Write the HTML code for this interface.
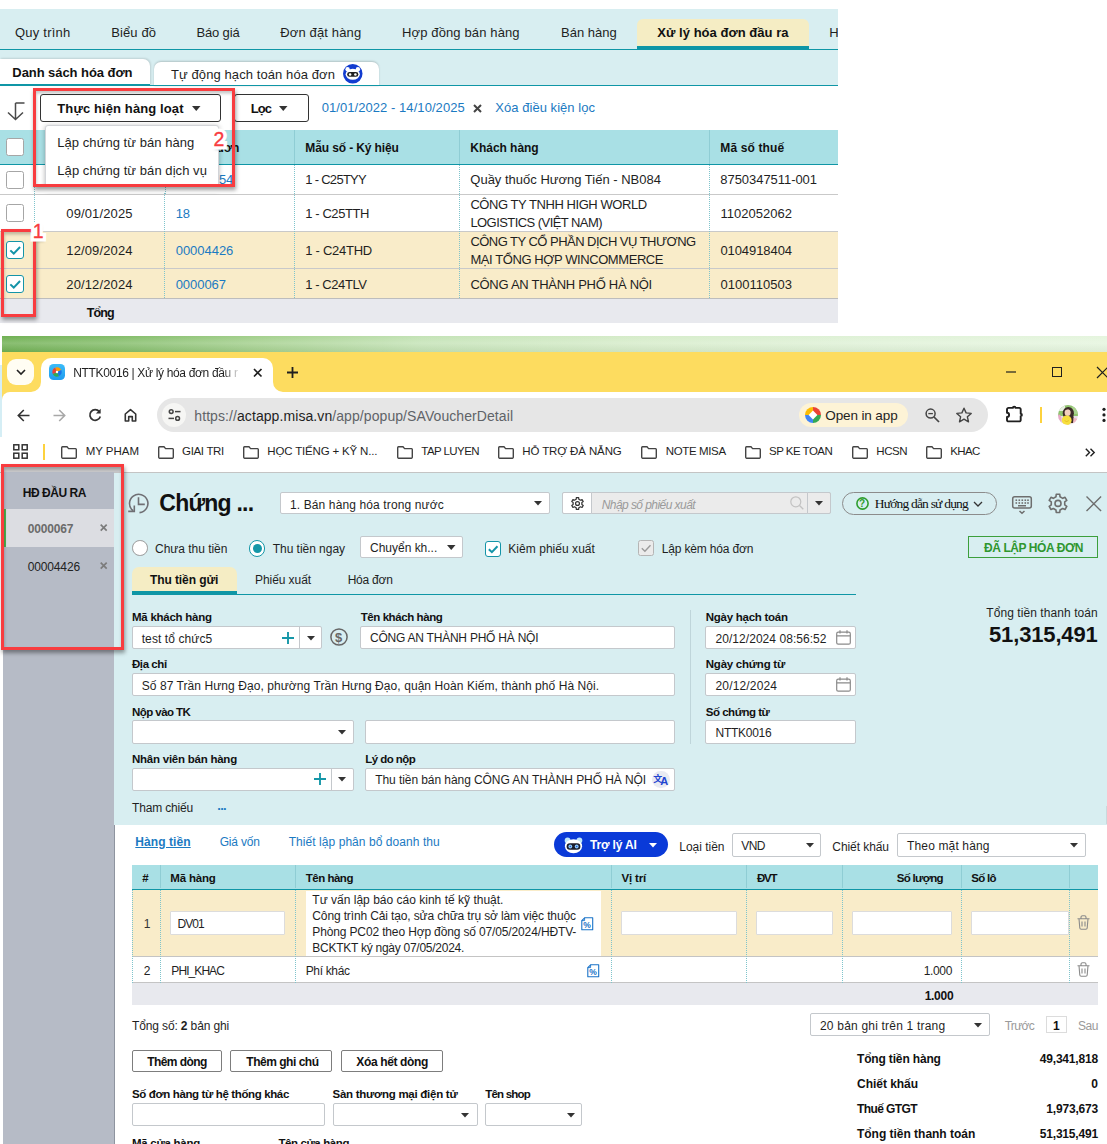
<!DOCTYPE html>
<html lang="vi"><head><meta charset="utf-8"><title>NTTK0016 | Xử lý hóa đơn đầu ra</title>
<style>
html,body{margin:0;padding:0;background:#fff}
body{width:1107px;height:1144px;position:relative;overflow:hidden;font-family:"Liberation Sans",sans-serif;font-size:13px;color:#1f1f1f}
#r{position:absolute;left:0;top:0;width:1107px;height:1144px;overflow:hidden}
#r div,#r svg,#r span.t{position:absolute;box-sizing:border-box}
#r svg{overflow:visible}
span.t{white-space:nowrap;line-height:20px;height:20px}
.inp{background:#fff;border:1px solid #c4c8cc;border-radius:2px}
.ser{font-family:"Liberation Serif",serif}
</style></head>
<body><div id="r">
<div style="left:0px;top:9px;width:838px;height:76px;background:#d8eef1"></div>
<div style="left:0px;top:49px;width:838px;height:1px;background:#0f96a6"></div>
<span class="t" style="font-size:13px;color:#1f1f1f;letter-spacing:0.23px;left:15px;top:23.3px;">Quy trình</span>
<span class="t" style="font-size:13px;color:#1f1f1f;letter-spacing:0.09px;left:111.3px;top:23.3px;">Biểu đồ</span>
<span class="t" style="font-size:13px;color:#1f1f1f;letter-spacing:-0.16px;left:196.5px;top:23.3px;">Báo giá</span>
<span class="t" style="font-size:13px;color:#1f1f1f;letter-spacing:0.14px;left:280.3px;top:23.3px;">Đơn đặt hàng</span>
<span class="t" style="font-size:13px;color:#1f1f1f;letter-spacing:0.13px;left:402px;top:23.3px;">Hợp đồng bán hàng</span>
<span class="t" style="font-size:13px;color:#1f1f1f;left:561px;top:23.3px;">Bán hàng</span>
<div style="left:636.7px;top:19px;width:172.6px;height:30.5px;background:#f5edc4;border-radius:6px 6px 0 0"></div>
<div style="left:636.7px;top:46px;width:172.6px;height:3.5px;background:#0f96a6"></div>
<span class="t" style="font-size:13px;color:#111;font-weight:700;letter-spacing:0.03px;left:657.3px;top:23.3px;">Xử lý hóa đơn đầu ra</span>
<span class="t" style="font-size:13px;color:#1f1f1f;left:829.3px;top:23.3px;width:9px;overflow:hidden">H</span>
<div style="left:0px;top:58.5px;width:149.5px;height:27.5px;background:#fff;border-radius:0 7px 0 0;box-shadow:1px -1px 2px rgba(0,0,0,.12)"></div>
<div style="left:154px;top:62px;width:225px;height:23.5px;background:#fff;border-radius:7px 7px 0 0;box-shadow:0 -0.5px 2px rgba(0,0,0,.18)"></div>
<div style="left:0px;top:85px;width:838px;height:1.2px;background:#0f96a6"></div>
<div style="left:0px;top:84px;width:149.5px;height:2.2px;background:#0f96a6"></div>
<span class="t" style="font-size:13px;color:#111;font-weight:700;letter-spacing:-0.06px;left:12.3px;top:63.1px;">Danh sách hóa đơn</span>
<span class="t" style="font-size:13px;color:#1f1f1f;letter-spacing:0.09px;left:171px;top:64.8px;">Tự động hạch toán hóa đơn</span>
<svg style="left:343.3px;top:63.8px;" width="19.5" height="19.5" viewBox="0 0 17 17"><circle cx="8.5" cy="8.5" r="8.5" fill="#123cd0"/><ellipse cx="8.5" cy="9" rx="6.2" ry="4.8" fill="#fff"/><circle cx="4" cy="4.6" r="1.9" fill="#fff"/><circle cx="13" cy="4.6" r="1.9" fill="#fff"/><rect x="3.6" y="7" width="9.8" height="4.2" rx="2.1" fill="#222"/><circle cx="6.2" cy="9.1" r="1.1" fill="#fff"/><circle cx="10.8" cy="9.1" r="1.1" fill="#fff"/></svg>
<svg style="left:6px;top:100px;" width="20" height="21" viewBox="0 0 20 21"><path d="M9.5 3H18.5M9.5 3V19M2 12.5L9.5 19.5L17 12.5" fill="none" stroke="#4a4a4a" stroke-width="1.5"/></svg>
<div style="left:40.3px;top:94px;width:180.4px;height:27.6px;border:1px solid #333;border-radius:3px;background:#fff"></div>
<span class="t" style="font-size:13px;color:#111;font-weight:700;letter-spacing:0.11px;left:57.3px;top:99.1px;">Thực hiện hàng loạt</span>
<svg style="left:192.05px;top:106.0px" width="8.5" height="5" viewBox="0 0 8.5 5"><path d="M0 0H8.5L4.25 5Z" fill="#333"/></svg>
<div style="left:234px;top:94px;width:75px;height:27.6px;border:1px solid #333;border-radius:3px;background:#fff"></div>
<span class="t" style="font-size:13px;color:#111;font-weight:700;letter-spacing:-0.94px;left:250.7px;top:99.1px;">Lọc</span>
<svg style="left:278.55px;top:106.0px" width="8.5" height="5" viewBox="0 0 8.5 5"><path d="M0 0H8.5L4.25 5Z" fill="#333"/></svg>
<span class="t" style="font-size:13px;color:#1b7ac2;letter-spacing:0.06px;left:321.7px;top:97.9px;">01/01/2022 - 14/10/2025</span>
<svg style="left:472.7px;top:103.7px;" width="9" height="9" viewBox="0 0 9 9"><path d="M1 1L8 8M8 1L1 8" stroke="#444" stroke-width="2"/></svg>
<span class="t" style="font-size:13px;color:#1b7ac2;letter-spacing:0.04px;left:495.3px;top:97.9px;">Xóa điều kiện lọc</span>
<div style="left:0px;top:130px;width:838px;height:34px;background:#a9e0e5"></div>
<div style="left:0px;top:164px;width:838px;height:1.2px;background:#0f96a6"></div>
<div style="left:294.3px;top:130px;width:1px;height:34px;background:#8fcdd4"></div>
<div style="left:459.3px;top:130px;width:1px;height:34px;background:#8fcdd4"></div>
<div style="left:709.3px;top:130px;width:1px;height:34px;background:#8fcdd4"></div>
<span class="t" style="font-size:12px;color:#111;font-weight:700;letter-spacing:-0.25px;left:175px;top:137.8px;">Số hóa đơn</span>
<span class="t" style="font-size:12px;color:#111;font-weight:700;letter-spacing:-0.12px;left:305.3px;top:137.8px;">Mẫu số - Ký hiệu</span>
<span class="t" style="font-size:12px;color:#111;font-weight:700;letter-spacing:-0.03px;left:470.3px;top:137.8px;">Khách hàng</span>
<span class="t" style="font-size:12px;color:#111;font-weight:700;letter-spacing:0.13px;left:720.3px;top:137.8px;">Mã số thuế</span>
<div style="left:0px;top:165.2px;width:838px;height:29.80000000000001px;background:#fff;border-bottom:1px solid #c9c9c9"></div>
<div style="left:0px;top:195px;width:838px;height:37px;background:#fff;border-bottom:1px solid #c9c9c9"></div>
<div style="left:0px;top:232px;width:838px;height:37px;background:#f9ecc9;border-bottom:1px solid #c9c9c9"></div>
<div style="left:0px;top:269px;width:838px;height:30px;background:#f9ecc9;border-bottom:1px solid #c9c9c9"></div>
<div style="left:0px;top:298px;width:838px;height:24.7px;background:#e8e9ee;border-top:1.5px solid #bdbdbd"></div>
<div style="left:34px;top:165.2px;width:0px;height:132.8px;border-left:1px dotted #7fc4cc"></div>
<div style="left:164px;top:165.2px;width:0px;height:132.8px;border-left:1px dotted #7fc4cc"></div>
<div style="left:294px;top:165.2px;width:0px;height:132.8px;border-left:1px dotted #7fc4cc"></div>
<div style="left:459px;top:165.2px;width:0px;height:132.8px;border-left:1px dotted #7fc4cc"></div>
<div style="left:709px;top:165.2px;width:0px;height:132.8px;border-left:1px dotted #7fc4cc"></div>
<span class="t" style="font-size:12.5px;color:#111;font-weight:700;letter-spacing:-0.89px;left:86.7px;top:302.8px;">Tổng</span>
<div style="left:6px;top:138px;width:18px;height:18px;background:#fff;border:1.2px solid #a6a6a6;border-radius:2.5px"></div>
<div style="left:6px;top:170.6px;width:18px;height:18px;background:#fff;border:1.2px solid #a6a6a6;border-radius:2.5px"></div>
<div style="left:6px;top:204px;width:18px;height:18px;background:#fff;border:1.2px solid #a6a6a6;border-radius:2.5px"></div>
<div style="left:6px;top:241px;width:18px;height:18px;background:#fff;border:1.5px solid #1494a8;border-radius:3px"></div>
<svg style="left:6px;top:241px;" width="18" height="18" viewBox="0 0 18 18"><path d="M4.32 9.36L7.74 12.6L14.040000000000001 5.94" fill="none" stroke="#1494a8" stroke-width="2"/></svg>
<div style="left:6px;top:275px;width:18px;height:18px;background:#fff;border:1.5px solid #1494a8;border-radius:3px"></div>
<svg style="left:6px;top:275px;" width="18" height="18" viewBox="0 0 18 18"><path d="M4.32 9.36L7.74 12.6L14.040000000000001 5.94" fill="none" stroke="#1494a8" stroke-width="2"/></svg>
<span class="t" style="font-size:13px;color:#1b7ac2;letter-spacing:-0.23px;left:219px;top:170.4px;text-decoration:underline">54</span>
<span class="t" style="font-size:13px;color:#1f1f1f;letter-spacing:-0.72px;left:305.3px;top:170.4px;">1 - C25TYY</span>
<span class="t" style="font-size:13px;color:#1f1f1f;left:470.3px;top:170.4px;">Quầy thuốc Hương Tiến - NB084</span>
<span class="t" style="font-size:13px;color:#1f1f1f;letter-spacing:-0.05px;left:720.3px;top:170.4px;">8750347511-001</span>
<span class="t" style="font-size:13px;color:#1f1f1f;letter-spacing:0.13px;left:66.3px;top:204.1px;">09/01/2025</span>
<span class="t" style="font-size:13px;color:#1b7ac2;letter-spacing:-0.08px;left:175.7px;top:204.1px;">18</span>
<span class="t" style="font-size:13px;color:#1f1f1f;letter-spacing:-0.42px;left:305.3px;top:204.1px;">1 - C25TTH</span>
<span class="t" style="font-size:13px;color:#1f1f1f;letter-spacing:-0.44px;left:470.4px;top:195.2px;">CÔNG TY TNHH HIGH WORLD</span>
<span class="t" style="font-size:13px;color:#1f1f1f;letter-spacing:-0.56px;left:470.4px;top:213.4px;">LOGISTICS (VIỆT NAM)</span>
<span class="t" style="font-size:13px;color:#1f1f1f;letter-spacing:0.03px;left:720.4px;top:204.1px;">1102052062</span>
<span class="t" style="font-size:13px;color:#1f1f1f;letter-spacing:0.13px;left:66.3px;top:241.1px;">12/09/2024</span>
<span class="t" style="font-size:13px;color:#1b7ac2;letter-spacing:-0.03px;left:175.7px;top:241.1px;">00004426</span>
<span class="t" style="font-size:13px;color:#1f1f1f;letter-spacing:-0.27px;left:305.3px;top:241.1px;">1 - C24THD</span>
<span class="t" style="font-size:13px;color:#1f1f1f;letter-spacing:-0.53px;left:470.4px;top:231.8px;">CÔNG TY CỔ PHẦN DỊCH VỤ THƯƠNG</span>
<span class="t" style="font-size:13px;color:#1f1f1f;letter-spacing:-0.42px;left:470.4px;top:249.8px;">MẠI TỔNG HỢP WINCOMMERCE</span>
<span class="t" style="font-size:13px;color:#1f1f1f;letter-spacing:-0.07px;left:720.4px;top:241.1px;">0104918404</span>
<span class="t" style="font-size:13px;color:#1f1f1f;letter-spacing:0.13px;left:66.3px;top:275.3px;">20/12/2024</span>
<span class="t" style="font-size:13px;color:#1b7ac2;letter-spacing:-0.05px;left:175.7px;top:275.3px;">0000067</span>
<span class="t" style="font-size:13px;color:#1f1f1f;letter-spacing:-0.43px;left:305.3px;top:275.3px;">1 - C24TLV</span>
<span class="t" style="font-size:13px;color:#1f1f1f;letter-spacing:-0.28px;left:470.4px;top:275.3px;">CÔNG AN THÀNH PHỐ HÀ NỘI</span>
<span class="t" style="font-size:13px;color:#1f1f1f;letter-spacing:0.03px;left:720.4px;top:275.3px;">0100110503</span>
<div style="left:45px;top:125px;width:173.6px;height:64px;background:#fff;border:1px solid #d2d4d8;border-radius:3px;box-shadow:0 1px 5px rgba(0,0,0,.3)"></div>
<span class="t" style="font-size:13px;color:#1f1f1f;letter-spacing:0.05px;left:57.3px;top:132.5px;">Lập chứng từ bán hàng</span>
<span class="t" style="font-size:13px;color:#1f1f1f;letter-spacing:0.06px;left:57.3px;top:160.5px;">Lập chứng từ bán dịch vụ</span>
<div style="left:36px;top:186.7px;width:199px;height:6.3px;background:#fff"></div>
<div style="left:34px;top:186.7px;width:0px;height:7.3px;border-left:1px dotted #7fc4cc"></div>
<div style="left:164.7px;top:186.7px;width:0px;height:7.3px;border-left:1px dotted #7fc4cc"></div>
<div style="left:33.2px;top:88px;width:201.8px;height:98.8px;border:3px solid #f83c3f;box-shadow:0.5px 3px 4px rgba(0,0,0,.38), inset 0.5px 2.5px 3px rgba(0,0,0,.22)"></div>
<div style="left:1px;top:229.1px;width:35px;height:87.9px;border:3px solid #f83c3f;box-shadow:0.5px 3px 4px rgba(0,0,0,.38), inset 0.5px 2.5px 3px rgba(0,0,0,.22)"></div>
<span class="t" style="font-size:19.5px;color:#fff;left:213.6px;top:128.7px;-webkit-text-stroke:7px #fff;text-shadow:1px 2.5px 3px rgba(0,0,0,.5);">2</span>
<span class="t" style="font-size:19.5px;color:#f83c3f;left:213.6px;top:128.7px;-webkit-text-stroke:0.35px #f83c3f;">2</span>
<span class="t" style="font-size:19.5px;color:#fff;left:32.8px;top:220.6px;-webkit-text-stroke:7px #fff;text-shadow:1px 2.5px 3px rgba(0,0,0,.5);">1</span>
<span class="t" style="font-size:19.5px;color:#f83c3f;left:32.8px;top:220.6px;-webkit-text-stroke:0.35px #f83c3f;">1</span>
<div style="left:2px;top:335.5px;width:1105px;height:16.3px;background:linear-gradient(90deg,#70b053 0,#82bc68 10%,#a6d190 24%,#c4e3b6 38%,#d6ecca 58%,#e0f2d8 80%,#e5f5de 100%)"></div>
<div style="left:2px;top:335.5px;width:1105px;height:16.3px;background:linear-gradient(180deg,rgba(255,255,255,.0) 0,rgba(255,255,255,.18) 45%,rgba(0,0,0,.04) 100%)"></div>
<div style="left:2px;top:351.8px;width:1105px;height:40.2px;background:#fddc5f"></div>
<div style="left:2px;top:391.7px;width:20px;height:20px;background:#fddc5f"></div>
<div style="left:2px;top:391.7px;width:1105px;height:80.3px;background:#ffffff;border-radius:8px 0 0 0"></div>
<div style="left:0px;top:437px;width:2px;height:35px;background:#ffffff"></div>
<div style="left:0px;top:365px;width:2px;height:72px;background:#d5eef5"></div>
<div style="left:7.3px;top:359px;width:27px;height:26px;background:#fffdf3;border-radius:9px"></div>
<svg style="left:16px;top:369px;" width="10" height="6" viewBox="0 0 10 6"><path d="M1 1L5 5L9 1" fill="none" stroke="#222" stroke-width="1.6"/></svg>
<div style="left:41px;top:358.3px;width:231.7px;height:34px;background:#ffffff;border-radius:10px 10px 0 0"></div>
<svg style="left:31px;top:381.7px;" width="10" height="10" viewBox="0 0 10 10"><path d="M10 0V10H0A10 10 0 0 0 10 0Z" fill="#ffffff"/></svg>
<svg style="left:272.7px;top:381.7px;" width="10" height="10" viewBox="0 0 10 10"><path d="M0 0V10H10A10 10 0 0 1 0 0Z" fill="#ffffff"/></svg>
<svg style="left:49px;top:363.8px;" width="16" height="16" viewBox="0 0 16 16"><defs><linearGradient id="fv" x1="0" y1="0" x2="0" y2="1"><stop offset="0" stop-color="#3cbcf8"/><stop offset="1" stop-color="#1f9bef"/></linearGradient></defs><rect x="0" y="0" width="16" height="16" rx="4.6" fill="url(#fv)"/><g transform="rotate(-25 8 8)"><path d="M8 3.3A4.7 4.7 0 0 1 12.7 8H8Z" fill="#ff9800"/><path d="M12.7 8A4.7 4.7 0 0 1 8 12.7V8Z" fill="#1a73e8"/><path d="M8 12.7A4.7 4.7 0 0 1 3.3 8H8Z" fill="#34a853"/><path d="M3.3 8A4.7 4.7 0 0 1 8 3.3V8Z" fill="#ea4335"/></g><circle cx="8" cy="8" r="1.2" fill="#fff"/></svg>
<span class="t" style="font-size:12px;color:#1f1f1f;letter-spacing:-0.34px;left:73.3px;top:363.4px;width:170px;overflow:hidden;-webkit-mask-image:linear-gradient(90deg,#000 0,#000 150px,transparent 168px)">NTTK0016 | Xử lý hóa đơn đầu r</span>
<svg style="left:252.5px;top:367.5px;" width="9.5" height="9.5" viewBox="0 0 9.5 9.5"><path d="M1 1L8.5 8.5M8.5 1L1 8.5" stroke="#1f1f1f" stroke-width="1.7"/></svg>
<svg style="left:287px;top:366.5px;" width="11" height="11" viewBox="0 0 11 11"><path d="M5.5 0V11M0 5.5H11" stroke="#1f1f1f" stroke-width="1.8"/></svg>
<svg style="left:1006.3px;top:371px;" width="10" height="2" viewBox="0 0 10 2"><path d="M0 1H10" stroke="#1f1f1f" stroke-width="1.2"/></svg>
<div style="left:1052px;top:366.7px;width:10.3px;height:10.3px;border:1.3px solid #1f1f1f"></div>
<svg style="left:1097.3px;top:366.5px;" width="11" height="11" viewBox="0 0 11 11"><path d="M0 0L11 11M11 0L0 11" stroke="#1f1f1f" stroke-width="1.2"/></svg>
<svg style="left:16.5px;top:408.5px;" width="13" height="13" viewBox="0 0 13 13"><path d="M12.5 6.5H1.5M6.8 1L1.3 6.5L6.8 12" fill="none" stroke="#333" stroke-width="1.6"/></svg>
<svg style="left:52.5px;top:408.5px;" width="13" height="13" viewBox="0 0 13 13"><path d="M0.5 6.5H11.5M6.2 1L11.7 6.5L6.2 12" fill="none" stroke="#a8a8a8" stroke-width="1.6"/></svg>
<svg style="left:88px;top:408px;" width="14" height="14" viewBox="0 0 14 14"><path d="M11.3 3.6A5.3 5.3 0 1 0 12.3 8.4" fill="none" stroke="#333" stroke-width="1.7"/><path d="M12.7 0.8V5.6H7.9Z" fill="#333"/></svg>
<svg style="left:124px;top:407.5px;" width="13" height="14" viewBox="0 0 13 14"><path d="M1.3 6L6.5 1.6L11.7 6V13H8.3V8.6H4.7V13H1.3Z" fill="none" stroke="#333" stroke-width="1.6" stroke-linejoin="round"/></svg>
<div style="left:157.3px;top:398.3px;width:830.6px;height:33.4px;background:#e6e6e6;border-radius:17px"></div>
<div style="left:161.7px;top:402.9px;width:24.4px;height:24.4px;background:#f6f6f4;border-radius:50%"></div>
<svg style="left:167.7px;top:408px;left:167.7px" width="13" height="14" viewBox="0 0 13 14"><g fill="none" stroke="#444" stroke-width="1.5"><circle cx="3.2" cy="3.6" r="1.9"/><path d="M7 3.6H12.5"/><circle cx="9.6" cy="10.4" r="1.9"/><path d="M0.5 10.4H6"/></g></svg>
<span class="t" style="font-size:14px;color:#1f1f1f;letter-spacing:0.08px;left:194.3px;top:405.8px;"><span style="color:#5f6368">https://</span><span style="color:#1f1f1f">actapp.misa.vn</span><span style="color:#5f6368">/app/popup/SAVoucherDetail</span></span>
<div style="left:799px;top:403.3px;width:109px;height:23.4px;background:#fdf3d6;border-radius:12px"></div>
<svg style="left:804.7px;top:407px;" width="16" height="16" viewBox="0 0 16 16"><circle cx="8" cy="8" r="8" fill="#fff"/><path d="M8 0A8 8 0 0 1 16 8H8Z" fill="#ea4335"/><path d="M16 8A8 8 0 0 1 8 16V8Z" fill="#34a853" /><path d="M8 16A8 8 0 0 1 0 8H8Z" fill="#4285f4"/><path d="M0 8A8 8 0 0 1 8 0V8Z" fill="#fbbc05"/><path d="M8 3.6L12.4 8L8 12.4L3.6 8Z" fill="#fff"/></svg>
<span class="t" style="font-size:13.5px;color:#1f1f1f;letter-spacing:-0.12px;left:825.3px;top:405.8px;">Open in app</span>
<svg style="left:924.5px;top:408px;" width="15" height="15" viewBox="0 0 15 15"><circle cx="5.6" cy="5.6" r="4.5" fill="none" stroke="#444" stroke-width="1.5"/><path d="M9 9L14 14" stroke="#444" stroke-width="1.7"/><path d="M3.3 5.6H7.9" stroke="#444" stroke-width="1.3"/></svg>
<svg style="left:956px;top:407px;" width="16" height="16" viewBox="0 0 16 16"><path d="M8 1.2L10.1 5.9L15.2 6.4L11.4 9.8L12.5 14.8L8 12.2L3.5 14.8L4.6 9.8L0.8 6.4L5.9 5.9Z" fill="none" stroke="#444" stroke-width="1.4" stroke-linejoin="round"/></svg>
<svg style="left:1006.4px;top:405px;" width="18" height="18" viewBox="0 0 18 18"><path d="M2.5 2.9H6.9A1.3 1.3 0 0 1 9.5 2.9H13.2A1.5 1.5 0 0 1 14.7 4.4V8.7A1.2 1.2 0 0 1 14.7 11.1V14.9A1.5 1.5 0 0 1 13.2 16.4H2.5A1.5 1.5 0 0 1 1 14.9V12A2.1 2.1 0 0 0 1 7.8V4.4A1.5 1.5 0 0 1 2.5 2.9Z" fill="none" stroke="#1f1f1f" stroke-width="1.9" stroke-linejoin="round"/></svg>
<div style="left:1040px;top:407.2px;width:2px;height:15.5px;background:#fdd23e"></div>
<svg style="left:1058.2px;top:404.9px;" width="20" height="20" viewBox="0 0 20 20"><defs><clipPath id="av"><circle cx="10" cy="10" r="10"/></clipPath></defs><g clip-path="url(#av)"><rect width="20" height="20" fill="#e9dfe6"/><rect x="0" y="0" width="20" height="11" fill="#8fc46f"/><path d="M0 0H7V6H0Z" fill="#e8f0e2"/><path d="M14 0H20V9H14Z" fill="#a9d28d"/><ellipse cx="10.3" cy="8.2" rx="5.6" ry="6.2" fill="#3b2a28"/><path d="M13 8C16 10 16.5 15 15 18H12Z" fill="#3b2a28"/><ellipse cx="9.6" cy="7.6" rx="3" ry="3.5" fill="#f3cfbd"/><path d="M6.8 5.6C8.5 4 11.5 4 12.8 6L12.6 4.2L7.2 4Z" fill="#3b2a28"/><path d="M0 9.5C2 9 3.5 11 3.5 13.5V20H0Z" fill="#e8a9c8"/><path d="M15.5 13C18 12.5 20 14 20 16V20H15Z" fill="#f0b8c4"/><circle cx="8.7" cy="15.3" r="4.9" fill="#f7df3e"/><path d="M6.6 15.6Q8.7 17.6 10.8 15.6" fill="none" stroke="#e0b21e" stroke-width="0.7"/></g></svg>
<svg style="left:1102px;top:407px;" width="4" height="17" viewBox="0 0 4 17"><circle cx="2" cy="2.3" r="1.6" fill="#1f1f1f"/><circle cx="2" cy="7.9" r="1.6" fill="#1f1f1f"/><circle cx="2" cy="13.4" r="1.6" fill="#1f1f1f"/></svg>
<svg style="left:13.3px;top:444.3px;" width="15" height="15" viewBox="0 0 15 15"><g fill="none" stroke="#333" stroke-width="1.5"><rect x="0.8" y="0.8" width="5" height="5"/><rect x="9.2" y="0.8" width="5" height="5"/><rect x="0.8" y="9.2" width="5" height="5"/><rect x="9.2" y="9.2" width="5" height="5"/></g></svg>
<div style="left:43.2px;top:444px;width:2px;height:15.7px;background:#fdd23e"></div>
<svg style="left:60.7px;top:445.7px;" width="16" height="13" viewBox="0 0 16 13"><path d="M1.5 0.8H6L7.6 2.6H14.5A0.9 0.9 0 0 1 15.3 3.5V11.3A0.9 0.9 0 0 1 14.5 12.2H1.5A0.9 0.9 0 0 1 0.7 11.3V1.7A0.9 0.9 0 0 1 1.5 0.8Z" fill="none" stroke="#444" stroke-width="1.4"/></svg>
<span class="t" style="font-size:11.5px;color:#1f1f1f;letter-spacing:-0.02px;left:85.7px;top:441.2px;">MY PHAM</span>
<svg style="left:157.7px;top:445.7px;" width="16" height="13" viewBox="0 0 16 13"><path d="M1.5 0.8H6L7.6 2.6H14.5A0.9 0.9 0 0 1 15.3 3.5V11.3A0.9 0.9 0 0 1 14.5 12.2H1.5A0.9 0.9 0 0 1 0.7 11.3V1.7A0.9 0.9 0 0 1 1.5 0.8Z" fill="none" stroke="#444" stroke-width="1.4"/></svg>
<span class="t" style="font-size:11.5px;color:#1f1f1f;letter-spacing:-0.32px;left:182px;top:441.2px;">GIAI TRI</span>
<svg style="left:242.7px;top:445.7px;" width="16" height="13" viewBox="0 0 16 13"><path d="M1.5 0.8H6L7.6 2.6H14.5A0.9 0.9 0 0 1 15.3 3.5V11.3A0.9 0.9 0 0 1 14.5 12.2H1.5A0.9 0.9 0 0 1 0.7 11.3V1.7A0.9 0.9 0 0 1 1.5 0.8Z" fill="none" stroke="#444" stroke-width="1.4"/></svg>
<span class="t" style="font-size:11.5px;color:#1f1f1f;letter-spacing:-0.17px;left:267.3px;top:441.2px;">HỌC TIẾNG + KỸ N...</span>
<svg style="left:396.7px;top:445.7px;" width="16" height="13" viewBox="0 0 16 13"><path d="M1.5 0.8H6L7.6 2.6H14.5A0.9 0.9 0 0 1 15.3 3.5V11.3A0.9 0.9 0 0 1 14.5 12.2H1.5A0.9 0.9 0 0 1 0.7 11.3V1.7A0.9 0.9 0 0 1 1.5 0.8Z" fill="none" stroke="#444" stroke-width="1.4"/></svg>
<span class="t" style="font-size:11.5px;color:#1f1f1f;letter-spacing:-0.57px;left:421.3px;top:441.2px;">TAP LUYEN</span>
<svg style="left:498.3px;top:445.7px;" width="16" height="13" viewBox="0 0 16 13"><path d="M1.5 0.8H6L7.6 2.6H14.5A0.9 0.9 0 0 1 15.3 3.5V11.3A0.9 0.9 0 0 1 14.5 12.2H1.5A0.9 0.9 0 0 1 0.7 11.3V1.7A0.9 0.9 0 0 1 1.5 0.8Z" fill="none" stroke="#444" stroke-width="1.4"/></svg>
<span class="t" style="font-size:11.5px;color:#1f1f1f;letter-spacing:-0.12px;left:522.3px;top:441.2px;">HỖ TRỢ ĐÀ NẴNG</span>
<svg style="left:641.3px;top:445.7px;" width="16" height="13" viewBox="0 0 16 13"><path d="M1.5 0.8H6L7.6 2.6H14.5A0.9 0.9 0 0 1 15.3 3.5V11.3A0.9 0.9 0 0 1 14.5 12.2H1.5A0.9 0.9 0 0 1 0.7 11.3V1.7A0.9 0.9 0 0 1 1.5 0.8Z" fill="none" stroke="#444" stroke-width="1.4"/></svg>
<span class="t" style="font-size:11.5px;color:#1f1f1f;letter-spacing:-0.36px;left:665.7px;top:441.2px;">NOTE MISA</span>
<svg style="left:745.3px;top:445.7px;" width="16" height="13" viewBox="0 0 16 13"><path d="M1.5 0.8H6L7.6 2.6H14.5A0.9 0.9 0 0 1 15.3 3.5V11.3A0.9 0.9 0 0 1 14.5 12.2H1.5A0.9 0.9 0 0 1 0.7 11.3V1.7A0.9 0.9 0 0 1 1.5 0.8Z" fill="none" stroke="#444" stroke-width="1.4"/></svg>
<span class="t" style="font-size:11.5px;color:#1f1f1f;letter-spacing:-0.51px;left:769px;top:441.2px;">SP KE TOAN</span>
<svg style="left:852.3px;top:445.7px;" width="16" height="13" viewBox="0 0 16 13"><path d="M1.5 0.8H6L7.6 2.6H14.5A0.9 0.9 0 0 1 15.3 3.5V11.3A0.9 0.9 0 0 1 14.5 12.2H1.5A0.9 0.9 0 0 1 0.7 11.3V1.7A0.9 0.9 0 0 1 1.5 0.8Z" fill="none" stroke="#444" stroke-width="1.4"/></svg>
<span class="t" style="font-size:11.5px;color:#1f1f1f;letter-spacing:-0.47px;left:876.3px;top:441.2px;">HCSN</span>
<svg style="left:926.3px;top:445.7px;" width="16" height="13" viewBox="0 0 16 13"><path d="M1.5 0.8H6L7.6 2.6H14.5A0.9 0.9 0 0 1 15.3 3.5V11.3A0.9 0.9 0 0 1 14.5 12.2H1.5A0.9 0.9 0 0 1 0.7 11.3V1.7A0.9 0.9 0 0 1 1.5 0.8Z" fill="none" stroke="#444" stroke-width="1.4"/></svg>
<span class="t" style="font-size:11.5px;color:#1f1f1f;letter-spacing:-0.64px;left:950.3px;top:441.2px;">KHAC</span>
<svg style="left:1085px;top:447.5px;" width="10" height="9" viewBox="0 0 10 9"><path d="M0.8 0.8L4.5 4.5L0.8 8.2M5.5 0.8L9.2 4.5L5.5 8.2" fill="none" stroke="#1f1f1f" stroke-width="1.4"/></svg>
<div style="left:0px;top:472px;width:1107px;height:1px;background:#c4c4c4"></div>
<div style="left:2.7px;top:467px;width:118.5px;height:5px;background:#c9c9cb"></div>
<div style="left:2.7px;top:471.5px;width:111.3px;height:680px;background:#b6bbc6"></div>
<div style="left:114px;top:473px;width:993px;height:352px;background:#d8eef1"></div>
<div style="left:114px;top:825px;width:993px;height:330px;background:#fff"></div>
<div style="left:113.6px;top:825px;width:1.2px;height:330px;background:#8e949f"></div>
<span class="t" style="font-size:12px;color:#111;font-weight:700;letter-spacing:-0.45px;left:22.7px;top:482.5px;">HĐ ĐẦU RA</span>
<div style="left:2.7px;top:508.7px;width:111.3px;height:38px;background:#dcdde2"></div>
<div style="left:4px;top:508.7px;width:2.2px;height:38px;background:#4caf50"></div>
<span class="t" style="font-size:12px;color:#6b6b6b;font-weight:700;letter-spacing:-0.16px;left:27.7px;top:518.5px;">0000067</span>
<span class="t" style="font-size:12px;color:#222;letter-spacing:-0.14px;left:27.7px;top:556.5px;">00004426</span>
<svg style="left:99.5px;top:524.0px;" width="7.4" height="7.4" viewBox="0 0 7.4 7.4"><path d="M0.7 0.7L6.7 6.7M6.7 0.7L0.7 6.7" stroke="#7c7c7c" stroke-width="1.7"/></svg>
<svg style="left:99.5px;top:562.0px;" width="7.4" height="7.4" viewBox="0 0 7.4 7.4"><path d="M0.7 0.7L6.7 6.7M6.7 0.7L0.7 6.7" stroke="#7c7c7c" stroke-width="1.7"/></svg>
<div style="left:1px;top:464px;width:123px;height:185.8px;border:3px solid #f83c3f;box-shadow:0.5px 3px 4px rgba(0,0,0,.38), inset 0.5px 2.5px 3px rgba(0,0,0,.22)"></div>
<svg style="left:127px;top:493px;" width="23" height="22" viewBox="0 0 23 22"><g fill="none" stroke="#6f6f74" stroke-width="1.6"><path d="M12.5 19.67A9.2 9.2 0 1 0 6.04 17.75"/><path d="M11.5 4.3V11.4H17.8"/><path d="M7.3 12.4V18.4H1.2"/></g></svg>
<span class="t" style="font-size:23px;color:#111;font-weight:700;letter-spacing:-0.78px;left:159.3px;top:493.3px;line-height:30px;height:30px;margin-top:-5px">Chứng ...</span>
<div class="inp" style="left:280.4px;top:492px;width:269.4px;height:22px;"></div>
<span class="t" style="font-size:12px;color:#1f1f1f;letter-spacing:0.12px;left:290px;top:494.5px;">1. Bán hàng hóa trong nước</span>
<svg style="left:534.3px;top:501.45px" width="8" height="4.5" viewBox="0 0 8 4.5"><path d="M0 0H8L4.0 4.5Z" fill="#333"/></svg>
<div style="left:561.7px;top:492px;width:269px;height:22px;background:#ebebeb;border:1px solid #c4c8cc;border-radius:2px"></div>
<div style="left:561.7px;top:492px;width:30.3px;height:22px;background:#fff;border:1px solid #c4c8cc;border-radius:2px 0 0 2px"></div>
<svg style="left:570.5px;top:496.5px;" width="13" height="13" viewBox="0 0 20 20"><path d="M8.23 0.87L11.77 0.87L12.02 3.40L14.71 4.95L17.02 3.90L18.79 6.97L16.72 8.45L16.72 11.55L18.79 13.03L17.02 16.10L14.71 15.05L12.02 16.60L11.77 19.13L8.23 19.13L7.98 16.60L5.29 15.05L2.98 16.10L1.21 13.03L3.28 11.55L3.28 8.45L1.21 6.97L2.98 3.90L5.29 4.95L7.98 3.40Z" fill="none" stroke="#333" stroke-width="1.9" stroke-linejoin="round"/><circle cx="10" cy="10" r="3" fill="none" stroke="#333" stroke-width="1.9"/></svg>
<span class="t" style="font-size:12px;color:#9a9a9a;letter-spacing:-0.56px;left:601.7px;top:494.8px;font-style:italic">Nhập số phiếu xuất</span>
<svg style="left:789.5px;top:496.3px;" width="14" height="14" viewBox="0 0 14 14"><circle cx="5.8" cy="5.8" r="5" fill="none" stroke="#c2c2c2" stroke-width="1.2"/><path d="M9.5 9.5L13.3 13.3" stroke="#c2c2c2" stroke-width="1.3"/></svg>
<div style="left:807.3px;top:492px;width:23.4px;height:22px;background:#ebebeb;border:1px solid #c4c8cc;border-radius:0 2px 2px 0"></div>
<svg style="left:814.8px;top:501.45px" width="8" height="4.5" viewBox="0 0 8 4.5"><path d="M0 0H8L4.0 4.5Z" fill="#333"/></svg>
<div style="left:842.3px;top:491.7px;width:154.4px;height:23.3px;border:1px solid #8c8c8c;border-radius:12px"></div>
<svg style="left:855.5px;top:496.8px;" width="13" height="13" viewBox="0 0 13 13"><circle cx="6.5" cy="6.5" r="5.6" fill="none" stroke="#2f9e2f" stroke-width="1.6"/></svg>
<span class="t" style="font-size:10px;color:#2f9e2f;font-weight:700;left:859.1px;top:494.1px;">?</span>
<span class="t" style="font-size:13.5px;color:#111;letter-spacing:-0.80px;left:874.7px;top:493.8px;font-family:'Liberation Serif',serif">Hướng dẫn sử dụng</span>
<svg style="left:973px;top:500.5px;" width="10" height="6" viewBox="0 0 10 6"><path d="M1 1L5 5L9 1" fill="none" stroke="#333" stroke-width="1.3"/></svg>
<svg style="left:1012px;top:495.5px;" width="20" height="18" viewBox="0 0 20 18"><g fill="none" stroke="#6e6e6e" stroke-width="1.5"><rect x="0.7" y="0.7" width="18.6" height="11.2" rx="2"/><path d="M7.5 15L10 17.3L12.5 15"/></g><g fill="#6e6e6e"><rect x="3.5" y="3.4" width="1.6" height="1.6"/><rect x="6.5" y="3.4" width="1.6" height="1.6"/><rect x="9.5" y="3.4" width="1.6" height="1.6"/><rect x="12.5" y="3.4" width="1.6" height="1.6"/><rect x="15.2" y="3.4" width="1.6" height="1.6"/><rect x="3.5" y="6.2" width="1.6" height="1.6"/><rect x="6.5" y="6.2" width="1.6" height="1.6"/><rect x="9.5" y="6.2" width="1.6" height="1.6"/><rect x="12.5" y="6.2" width="1.6" height="1.6"/><rect x="15.2" y="6.2" width="1.6" height="1.6"/><rect x="6" y="9" width="8" height="1.5"/></g></svg>
<svg style="left:1047.6px;top:493.1px;" width="20" height="20.8" viewBox="0 0 20 20"><path d="M8.23 0.87L11.77 0.87L12.02 3.40L14.71 4.95L17.02 3.90L18.79 6.97L16.72 8.45L16.72 11.55L18.79 13.03L17.02 16.10L14.71 15.05L12.02 16.60L11.77 19.13L8.23 19.13L7.98 16.60L5.29 15.05L2.98 16.10L1.21 13.03L3.28 11.55L3.28 8.45L1.21 6.97L2.98 3.90L5.29 4.95L7.98 3.40Z" fill="none" stroke="#6e6e6e" stroke-width="1.6" stroke-linejoin="round"/><circle cx="10" cy="10" r="3" fill="none" stroke="#6e6e6e" stroke-width="1.6"/></svg>
<svg style="left:1085.7px;top:495.7px;" width="15.6" height="15.6" viewBox="0 0 15.6 15.6"><path d="M0.5 0.5L15.1 15.1M15.1 0.5L0.5 15.1" stroke="#6e6e6e" stroke-width="1.4"/></svg>
<div style="left:132px;top:540.3px;width:15.6px;height:15.6px;background:#fff;border:1px solid #9a9a9a;border-radius:50%"></div>
<span class="t" style="font-size:12px;color:#1f1f1f;letter-spacing:-0.03px;left:155px;top:539.1px;">Chưa thu tiền</span>
<div style="left:248.7px;top:540px;width:16.6px;height:16.6px;background:#fff;border:1.3px solid #1597a8;border-radius:50%"></div>
<div style="left:252.5px;top:543.8px;width:9px;height:9px;background:#1597a8;border-radius:50%"></div>
<span class="t" style="font-size:12px;color:#1f1f1f;letter-spacing:-0.03px;left:272.7px;top:539.1px;">Thu tiền ngay</span>
<div class="inp" style="left:360px;top:536px;width:102.7px;height:22.3px"></div>
<span class="t" style="font-size:12px;color:#1f1f1f;letter-spacing:-0.01px;left:370px;top:538.3px;">Chuyển kh...</span>
<svg style="left:447.45px;top:545.0px" width="8.5" height="5" viewBox="0 0 8.5 5"><path d="M0 0H8.5L4.25 5Z" fill="#333"/></svg>
<div style="left:485px;top:540.5px;width:16px;height:16px;background:#fff;border:1.5px solid #1494a8;border-radius:3px"></div>
<svg style="left:485px;top:540.5px;" width="16" height="16" viewBox="0 0 16 16"><path d="M3.84 8.32L6.88 11.2L12.48 5.28" fill="none" stroke="#1494a8" stroke-width="2"/></svg>
<span class="t" style="font-size:12px;color:#1f1f1f;letter-spacing:0.04px;left:508.3px;top:539.1px;">Kiêm phiếu xuất</span>
<div style="left:638.3px;top:539.8px;width:16px;height:16px;background:#ebebeb;border:1.2px solid #b5b5b5;border-radius:2.5px"></div>
<svg style="left:638.3px;top:539.8px;" width="16" height="16" viewBox="0 0 16 16"><path d="M3.8 8.3L6.9 11.2L12.5 5.3" fill="none" stroke="#9a9a9a" stroke-width="1.4"/></svg>
<span class="t" style="font-size:12px;color:#1f1f1f;letter-spacing:-0.16px;left:661.7px;top:539.1px;">Lập kèm hóa đơn</span>
<div style="left:968px;top:536.2px;width:130px;height:21.6px;border:1.3px solid #3c9f3c"></div>
<span class="t" style="font-size:12px;color:#2f962f;font-weight:700;letter-spacing:-0.42px;left:984px;top:537.6px;">ĐÃ LẬP HÓA ĐƠN</span>
<div style="left:132px;top:567.3px;width:105.3px;height:27px;background:#f5edc4;border-radius:7px 7px 0 0"></div>
<div style="left:132px;top:591px;width:105.3px;height:3.3px;background:#0f96a6"></div>
<div style="left:132px;top:593.6px;width:724.3px;height:1.2px;background:#0f96a6"></div>
<span class="t" style="font-size:12px;color:#111;font-weight:700;letter-spacing:-0.09px;left:150px;top:569.8px;">Thu tiền gửi</span>
<span class="t" style="font-size:12px;color:#1f1f1f;letter-spacing:-0.07px;left:255px;top:569.8px;">Phiếu xuất</span>
<span class="t" style="font-size:12px;color:#1f1f1f;letter-spacing:-0.23px;left:347.7px;top:569.8px;">Hóa đơn</span>
<span class="t" style="font-size:11.5px;color:#111;font-weight:700;letter-spacing:-0.26px;left:132px;top:607.0px;">Mã khách hàng</span>
<div class="inp" style="left:132px;top:626px;width:190px;height:23px;"></div>
<span class="t" style="font-size:12px;color:#1f1f1f;letter-spacing:0.09px;left:141.7px;top:628.8px;">test tổ chức5</span>
<svg style="left:282.3px;top:632px;" width="12" height="12" viewBox="0 0 12 12"><path d="M6 0V12M0 6H12" stroke="#1597a8" stroke-width="1.9"/></svg>
<div style="left:299px;top:627px;width:1px;height:21px;background:#c4c8cc"></div>
<svg style="left:306.5px;top:635.75px" width="8" height="4.5" viewBox="0 0 8 4.5"><path d="M0 0H8L4.0 4.5Z" fill="#333"/></svg>
<svg style="left:329.5px;top:628.3px;" width="18" height="18" viewBox="0 0 18 18"><circle cx="9" cy="9" r="8.1" fill="none" stroke="#666" stroke-width="1.5"/></svg>
<span class="t" style="font-size:13px;color:#666;font-weight:700;left:334.9px;top:628.1px;">$</span>
<span class="t" style="font-size:11.5px;color:#111;font-weight:700;letter-spacing:-0.42px;left:360.7px;top:607.0px;">Tên khách hàng</span>
<div class="inp" style="left:360px;top:626px;width:314.7px;height:23px;"></div>
<span class="t" style="font-size:12px;color:#1f1f1f;letter-spacing:-0.23px;left:370px;top:627.8px;">CÔNG AN THÀNH PHỐ HÀ NỘI</span>
<span class="t" style="font-size:11.5px;color:#111;font-weight:700;letter-spacing:-0.43px;left:132px;top:654.1px;">Địa chỉ</span>
<div class="inp" style="left:132px;top:673px;width:542.7px;height:22.5px;"></div>
<span class="t" style="font-size:12px;color:#1f1f1f;letter-spacing:0.07px;left:141.7px;top:676.3px;">Số 87 Trần Hưng Đạo, phường Trần Hưng Đạo, quận Hoàn Kiếm, thành phố Hà Nội.</span>
<span class="t" style="font-size:11.5px;color:#111;font-weight:700;letter-spacing:-0.56px;left:132px;top:702.1px;">Nộp vào TK</span>
<div class="inp" style="left:132px;top:720px;width:221.7px;height:23.5px;"></div>
<svg style="left:338.0px;top:730.25px" width="8" height="4.5" viewBox="0 0 8 4.5"><path d="M0 0H8L4.0 4.5Z" fill="#333"/></svg>
<div class="inp" style="left:365px;top:720px;width:309.7px;height:23.5px;"></div>
<span class="t" style="font-size:11.5px;color:#111;font-weight:700;letter-spacing:-0.24px;left:132px;top:749.1px;">Nhân viên bán hàng</span>
<div class="inp" style="left:132px;top:768px;width:221.7px;height:22.8px;"></div>
<svg style="left:314px;top:773.2px;" width="12" height="12" viewBox="0 0 12 12"><path d="M6 0V12M0 6H12" stroke="#1597a8" stroke-width="1.9"/></svg>
<div style="left:330.5px;top:769px;width:1px;height:21px;background:#c4c8cc"></div>
<svg style="left:338.0px;top:777.25px" width="8" height="4.5" viewBox="0 0 8 4.5"><path d="M0 0H8L4.0 4.5Z" fill="#333"/></svg>
<span class="t" style="font-size:11.5px;color:#111;font-weight:700;letter-spacing:-0.55px;left:365.3px;top:749.1px;">Lý do nộp</span>
<div class="inp" style="left:365px;top:768px;width:309.7px;height:22.8px;"></div>
<span class="t" style="font-size:12px;color:#1f1f1f;letter-spacing:-0.07px;left:375.2px;top:769.7px;">Thu tiền bán hàng CÔNG AN THÀNH PHỐ HÀ NỘI</span>
<div style="left:652px;top:770.5px;width:17.5px;height:17.5px;background:#e9ebf2;border-radius:50%"></div>
<span class="t" style="font-size:9px;color:#1f44d0;font-weight:700;left:653.3px;top:768.6px;font-family:'Liberation Sans','Noto Sans CJK SC',sans-serif">文</span>
<span class="t" style="font-size:11px;color:#1f44d0;font-weight:700;left:660.3px;top:771.1px;">A</span>
<span class="t" style="font-size:12px;color:#1f1f1f;letter-spacing:-0.17px;left:132px;top:797.5px;">Tham chiếu</span>
<span class="t" style="font-size:13px;color:#1b7ac2;font-weight:700;letter-spacing:-0.71px;left:217.3px;top:796.3px;">...</span>
<div style="left:690.3px;top:609.5px;width:1px;height:134px;background:#bfd5da"></div>
<span class="t" style="font-size:11.5px;color:#111;font-weight:700;letter-spacing:-0.27px;left:705.8px;top:607.0px;">Ngày hạch toán</span>
<div class="inp" style="left:705px;top:626px;width:151px;height:23px;"></div>
<span class="t" style="font-size:12px;color:#1f1f1f;letter-spacing:0.05px;left:715.5px;top:628.8px;">20/12/2024 08:56:52</span>
<svg style="left:836px;top:629.5px;" width="15" height="15" viewBox="0 0 15 15"><g fill="none" stroke="#8a8a8a" stroke-width="1.2"><rect x="0.7" y="2.2" width="13.6" height="12" rx="1.5"/><path d="M0.7 5.8H14.3M4 0.3V3.4M11 0.3V3.4"/></g></svg>
<span class="t" style="font-size:11.5px;color:#111;font-weight:700;letter-spacing:-0.25px;left:705.8px;top:654.1px;">Ngày chứng từ</span>
<div class="inp" style="left:705px;top:673px;width:151px;height:22.5px;"></div>
<span class="t" style="font-size:12px;color:#1f1f1f;letter-spacing:0.16px;left:715.5px;top:676.0px;">20/12/2024</span>
<svg style="left:836px;top:676.5px;" width="15" height="15" viewBox="0 0 15 15"><g fill="none" stroke="#8a8a8a" stroke-width="1.2"><rect x="0.7" y="2.2" width="13.6" height="12" rx="1.5"/><path d="M0.7 5.8H14.3M4 0.3V3.4M11 0.3V3.4"/></g></svg>
<span class="t" style="font-size:11.5px;color:#111;font-weight:700;letter-spacing:-0.49px;left:705.8px;top:701.5px;">Số chứng từ</span>
<div class="inp" style="left:705px;top:720px;width:151px;height:23.5px;"></div>
<span class="t" style="font-size:12px;color:#1f1f1f;letter-spacing:-0.27px;left:715.5px;top:723.4px;">NTTK0016</span>
<span class="t" style="font-size:12px;color:#1f1f1f;letter-spacing:0.07px;left:986.3px;top:602.6px;">Tổng tiền thanh toán</span>
<span class="t" style="font-size:22px;color:#111;font-weight:700;letter-spacing:-0.15px;left:989px;top:625.1px;line-height:28px;height:28px;margin-top:-4px">51,315,491</span>
<div style="left:1105.5px;top:806px;width:1.5px;height:18.3px;background:#c9d9dd"></div>
<span class="t" style="font-size:12px;color:#1b7ac2;font-weight:700;letter-spacing:0.08px;left:135.3px;top:831.5px;text-decoration:underline">Hàng tiền</span>
<span class="t" style="font-size:12px;color:#1b7ac2;letter-spacing:-0.19px;left:219.7px;top:831.5px;">Giá vốn</span>
<span class="t" style="font-size:12px;color:#1b7ac2;letter-spacing:0.06px;left:288.7px;top:831.5px;">Thiết lập phân bổ doanh thu</span>
<div style="left:554px;top:832.3px;width:114.3px;height:25px;background:#0a3ad8;border-radius:13px"></div>
<svg style="left:564px;top:836.5px;" width="19" height="17" viewBox="0 0 19 17"><circle cx="3.6" cy="3.4" r="2.9" fill="#bfe6fa"/><circle cx="15.4" cy="3.4" r="2.9" fill="#bfe6fa"/><ellipse cx="9.5" cy="9.3" rx="8.6" ry="7" fill="#fff"/><rect x="2.6" y="6.2" width="13.8" height="6.6" rx="3.3" fill="#1b1b2b"/><circle cx="6.3" cy="9.5" r="1.9" fill="#8fd0ff"/><circle cx="12.7" cy="9.5" r="1.9" fill="#8fd0ff"/><circle cx="6.3" cy="9.5" r="0.8" fill="#2a4fd0"/><circle cx="12.7" cy="9.5" r="0.8" fill="#2a4fd0"/></svg>
<span class="t" style="font-size:12px;color:#fff;font-weight:700;letter-spacing:-0.16px;left:590px;top:835.3px;">Trợ lý AI</span>
<svg style="left:649.3px;top:843.05px" width="8" height="4.5" viewBox="0 0 8 4.5"><path d="M0 0H8L4.0 4.5Z" fill="#fff"/></svg>
<span class="t" style="font-size:12px;color:#1f1f1f;letter-spacing:-0.02px;left:679.3px;top:836.5px;">Loại tiền</span>
<div class="inp" style="left:732px;top:833px;width:89.3px;height:23.5px;"></div>
<span class="t" style="font-size:12px;color:#1f1f1f;letter-spacing:-0.55px;left:741.3px;top:836.3px;">VND</span>
<svg style="left:805.7px;top:843.25px" width="8" height="4.5" viewBox="0 0 8 4.5"><path d="M0 0H8L4.0 4.5Z" fill="#333"/></svg>
<span class="t" style="font-size:12px;color:#1f1f1f;letter-spacing:-0.07px;left:832.3px;top:836.5px;">Chiết khấu</span>
<div class="inp" style="left:897.3px;top:833px;width:188.4px;height:23.5px;"></div>
<span class="t" style="font-size:12px;color:#1f1f1f;letter-spacing:0.15px;left:907px;top:836.3px;">Theo mặt hàng</span>
<svg style="left:1070.0px;top:843.25px" width="8" height="4.5" viewBox="0 0 8 4.5"><path d="M0 0H8L4.0 4.5Z" fill="#333"/></svg>
<div style="left:132px;top:865.3px;width:966px;height:24px;background:#a9e0e5"></div>
<div style="left:132px;top:888.6px;width:966px;height:1px;background:#0f96a6"></div>
<div style="left:160px;top:865.3px;width:1px;height:23px;background:#8fcdd4"></div>
<div style="left:294.5px;top:865.3px;width:1px;height:23px;background:#8fcdd4"></div>
<div style="left:611px;top:865.3px;width:1px;height:23px;background:#8fcdd4"></div>
<div style="left:746px;top:865.3px;width:1px;height:23px;background:#8fcdd4"></div>
<div style="left:842px;top:865.3px;width:1px;height:23px;background:#8fcdd4"></div>
<div style="left:961px;top:865.3px;width:1px;height:23px;background:#8fcdd4"></div>
<div style="left:1069px;top:865.3px;width:1px;height:23px;background:#8fcdd4"></div>
<span class="t" style="font-size:11.5px;color:#111;font-weight:700;letter-spacing:0.59px;left:142.3px;top:868.1px;">#</span>
<span class="t" style="font-size:11.5px;color:#111;font-weight:700;letter-spacing:-0.18px;left:170.3px;top:868.1px;">Mã hàng</span>
<span class="t" style="font-size:11.5px;color:#111;font-weight:700;letter-spacing:-0.48px;left:305.7px;top:868.1px;">Tên hàng</span>
<span class="t" style="font-size:11.5px;color:#111;font-weight:700;letter-spacing:-0.18px;left:621.5px;top:868.1px;">Vị trí</span>
<span class="t" style="font-size:11.5px;color:#111;font-weight:700;letter-spacing:-1.20px;left:757px;top:868.1px;">ĐVT</span>
<span class="t" style="font-size:11.5px;color:#111;font-weight:700;letter-spacing:-0.67px;left:896.7px;top:868.1px;">Số lượng</span>
<span class="t" style="font-size:11.5px;color:#111;font-weight:700;letter-spacing:-0.74px;left:971.3px;top:868.1px;">Số lô</span>
<div style="left:132px;top:889.6px;width:966px;height:67px;background:#f9ecc9;border-bottom:1px solid #c4c4c4"></div>
<div style="left:132px;top:956.6px;width:966px;height:26.4px;background:#fff;border-bottom:1px solid #c4c4c4"></div>
<div style="left:132px;top:983px;width:966px;height:21.6px;background:#e8e9ee"></div>
<div style="left:132px;top:889.6px;width:0px;height:93px;border-left:1px dotted #7fc4cc"></div>
<div style="left:160px;top:889.6px;width:0px;height:93px;border-left:1px dotted #7fc4cc"></div>
<div style="left:294.5px;top:889.6px;width:0px;height:93px;border-left:1px dotted #7fc4cc"></div>
<div style="left:611px;top:889.6px;width:0px;height:93px;border-left:1px dotted #7fc4cc"></div>
<div style="left:746px;top:889.6px;width:0px;height:93px;border-left:1px dotted #7fc4cc"></div>
<div style="left:842px;top:889.6px;width:0px;height:93px;border-left:1px dotted #7fc4cc"></div>
<div style="left:961px;top:889.6px;width:0px;height:93px;border-left:1px dotted #7fc4cc"></div>
<div style="left:1069px;top:889.6px;width:0px;height:93px;border-left:1px dotted #7fc4cc"></div>
<span class="t" style="font-size:12px;color:#333;left:143.7px;top:914.1px;">1</span>
<div style="left:170.3px;top:911px;width:114.4px;height:23.5px;background:#fff;border:1px solid #dcdcdc;border-radius:1px"></div>
<span class="t" style="font-size:12px;color:#1f1f1f;letter-spacing:-0.96px;left:177.5px;top:914.1px;">DV01</span>
<div style="left:305.7px;top:890.5px;width:295.6px;height:65.2px;background:#fff"></div>
<span class="t" style="font-size:12px;color:#1f1f1f;letter-spacing:0.01px;left:312.3px;top:889.9px;">Tư vấn lập báo cáo kinh tế kỹ thuật.</span>
<span class="t" style="font-size:12px;color:#1f1f1f;letter-spacing:-0.13px;left:312.3px;top:906.0px;">Công trình Cải tạo, sửa chữa trụ sở làm việc thuộc</span>
<span class="t" style="font-size:12px;color:#1f1f1f;letter-spacing:-0.14px;left:312.3px;top:922.1px;">Phòng PC02 theo Hợp đồng số 07/05/2024/HĐTV-</span>
<span class="t" style="font-size:12px;color:#1f1f1f;letter-spacing:-0.26px;left:312.3px;top:938.2px;">BCKTKT ký ngày 07/05/2024.</span>
<svg style="left:581px;top:916.5px;" width="12.5" height="13.5" viewBox="0 0 12.5 13.5"><path d="M0.8 3.6L3.6 0.8H11.7V12.7H0.8Z" fill="#fff" stroke="#1a73c8" stroke-width="1.1" stroke-linejoin="round"/><path d="M0.8 3.6H3.6V0.8" fill="none" stroke="#1a73c8" stroke-width="0.9"/></svg>
<span class="t" style="font-size:8.5px;color:#1a73c8;font-weight:700;left:583.3px;top:914.9px;letter-spacing:-0.3px">%</span>
<div style="left:621.3px;top:911px;width:115.40000000000009px;height:23.5px;background:#fff;border:1px solid #dcdcdc;border-radius:1px"></div>
<div style="left:756.3px;top:911px;width:76.70000000000005px;height:23.5px;background:#fff;border:1px solid #dcdcdc;border-radius:1px"></div>
<div style="left:852.3px;top:911px;width:99.30000000000007px;height:23.5px;background:#fff;border:1px solid #dcdcdc;border-radius:1px"></div>
<div style="left:971.3px;top:911px;width:98.0px;height:23.5px;background:#fff;border:1px solid #dcdcdc;border-radius:1px"></div>
<svg style="left:1077px;top:914.7px;" width="13" height="15" viewBox="0 0 13 15"><g fill="none" stroke="#8a8a8a" stroke-width="1.1"><path d="M0.5 3.8H12.5M4 3.6V2.2A1.5 1.5 0 0 1 5.5 0.7H7.5A1.5 1.5 0 0 1 9 2.2V3.6M2 3.8L2.8 13A1.4 1.4 0 0 0 4.2 14.3H8.8A1.4 1.4 0 0 0 10.2 13L11 3.8M5 6.5V11.5M8 6.5V11.5"/></g></svg>
<span class="t" style="font-size:12px;color:#222;left:143.7px;top:961.3px;">2</span>
<span class="t" style="font-size:12px;color:#1f1f1f;letter-spacing:-0.92px;left:171.3px;top:961.3px;">PHI_KHAC</span>
<span class="t" style="font-size:12px;color:#1f1f1f;letter-spacing:-0.34px;left:305.7px;top:961.3px;">Phí khác</span>
<svg style="left:587px;top:963.7px;" width="12.5" height="13.5" viewBox="0 0 12.5 13.5"><path d="M0.8 3.6L3.6 0.8H11.7V12.7H0.8Z" fill="#fff" stroke="#1a73c8" stroke-width="1.1" stroke-linejoin="round"/><path d="M0.8 3.6H3.6V0.8" fill="none" stroke="#1a73c8" stroke-width="0.9"/></svg>
<span class="t" style="font-size:8.5px;color:#1a73c8;font-weight:700;left:589.3px;top:962.1px;letter-spacing:-0.3px">%</span>
<span class="t" style="font-size:12px;color:#1f1f1f;letter-spacing:-0.35px;left:923.7px;top:961.3px;">1.000</span>
<svg style="left:1077px;top:961.5px;" width="13" height="15" viewBox="0 0 13 15"><g fill="none" stroke="#8a8a8a" stroke-width="1.1"><path d="M0.5 3.8H12.5M4 3.6V2.2A1.5 1.5 0 0 1 5.5 0.7H7.5A1.5 1.5 0 0 1 9 2.2V3.6M2 3.8L2.8 13A1.4 1.4 0 0 0 4.2 14.3H8.8A1.4 1.4 0 0 0 10.2 13L11 3.8M5 6.5V11.5M8 6.5V11.5"/></g></svg>
<span class="t" style="font-size:12px;color:#111;font-weight:700;letter-spacing:-0.29px;left:924.7px;top:985.6px;">1.000</span>
<span class="t" style="font-size:12px;color:#1f1f1f;letter-spacing:-0.13px;left:132px;top:1015.8px;">Tổng số: <b>2</b> bản ghi</span>
<div class="inp" style="left:810.3px;top:1013px;width:179.4px;height:23px;"></div>
<span class="t" style="font-size:12px;color:#1f1f1f;letter-spacing:0.20px;left:820px;top:1015.8px;">20 bản ghi trên 1 trang</span>
<svg style="left:974.0px;top:1022.75px" width="8" height="4.5" viewBox="0 0 8 4.5"><path d="M0 0H8L4.0 4.5Z" fill="#333"/></svg>
<span class="t" style="font-size:12px;color:#9a9a9a;letter-spacing:-0.70px;left:1004.7px;top:1015.8px;">Trước</span>
<div style="left:1046.3px;top:1015.7px;width:20.7px;height:17px;background:#fff;border:1px solid #dcdcdc"></div>
<span class="t" style="font-size:12px;color:#111;font-weight:700;left:1053px;top:1015.5px;">1</span>
<span class="t" style="font-size:12px;color:#9a9a9a;letter-spacing:-0.45px;left:1078px;top:1015.8px;">Sau</span>
<div style="left:132px;top:1050.2px;width:90px;height:21.6px;background:#fff;border:1px solid #7d7d7d;border-radius:2px"></div>
<span class="t" style="font-size:12px;color:#111;font-weight:700;letter-spacing:-0.59px;left:147.3px;top:1052.0px;">Thêm dòng</span>
<div style="left:230px;top:1050.2px;width:102px;height:21.6px;background:#fff;border:1px solid #7d7d7d;border-radius:2px"></div>
<span class="t" style="font-size:12px;color:#111;font-weight:700;letter-spacing:-0.48px;left:246.3px;top:1052.0px;">Thêm ghi chú</span>
<div style="left:340.5px;top:1050.2px;width:102.5px;height:21.6px;background:#fff;border:1px solid #7d7d7d;border-radius:2px"></div>
<span class="t" style="font-size:12px;color:#111;font-weight:700;letter-spacing:-0.36px;left:356.3px;top:1052.0px;">Xóa hết dòng</span>
<span class="t" style="font-size:11.5px;color:#111;font-weight:700;letter-spacing:-0.37px;left:132px;top:1083.6px;">Số đơn hàng từ hệ thống khác</span>
<span class="t" style="font-size:11.5px;color:#111;font-weight:700;letter-spacing:-0.27px;left:332.5px;top:1083.6px;">Sàn thương mại điện tử</span>
<span class="t" style="font-size:11.5px;color:#111;font-weight:700;letter-spacing:-0.79px;left:485.2px;top:1083.6px;">Tên shop</span>
<div class="inp" style="left:132px;top:1103.4px;width:192.6px;height:23px;"></div>
<div class="inp" style="left:332.5px;top:1103.4px;width:145.7px;height:23px;"></div>
<svg style="left:461.0px;top:1112.75px" width="8" height="4.5" viewBox="0 0 8 4.5"><path d="M0 0H8L4.0 4.5Z" fill="#333"/></svg>
<div class="inp" style="left:485.2px;top:1103.4px;width:96.8px;height:23px;"></div>
<svg style="left:566.5px;top:1112.75px" width="8" height="4.5" viewBox="0 0 8 4.5"><path d="M0 0H8L4.0 4.5Z" fill="#333"/></svg>
<span class="t" style="font-size:11.5px;color:#111;font-weight:700;letter-spacing:-0.27px;left:132px;top:1133.4px;">Mã cửa hàng</span>
<span class="t" style="font-size:11.5px;color:#111;font-weight:700;letter-spacing:-0.40px;left:278.4px;top:1133.4px;">Tên cửa hàng</span>
<span class="t" style="font-size:12px;color:#111;font-weight:700;letter-spacing:-0.16px;left:857px;top:1049.0px;">Tổng tiền hàng</span>
<span class="t" style="font-size:12px;color:#111;font-weight:700;letter-spacing:-0.18px;right:9px;top:1049.0px;">49,341,818</span>
<span class="t" style="font-size:12px;color:#111;font-weight:700;letter-spacing:-0.03px;left:857px;top:1073.7px;">Chiết khấu</span>
<span class="t" style="font-size:12px;color:#111;font-weight:700;right:9px;top:1073.7px;">0</span>
<span class="t" style="font-size:12px;color:#111;font-weight:700;letter-spacing:-0.59px;left:857px;top:1099.0px;">Thuế GTGT</span>
<span class="t" style="font-size:12px;color:#111;font-weight:700;letter-spacing:-0.19px;right:9px;top:1099.0px;">1,973,673</span>
<span class="t" style="font-size:12px;color:#111;font-weight:700;letter-spacing:-0.02px;left:857px;top:1124.0px;">Tổng tiền thanh toán</span>
<span class="t" style="font-size:12px;color:#111;font-weight:700;letter-spacing:-0.18px;right:9px;top:1124.0px;">51,315,491</span>
</div></body></html>
